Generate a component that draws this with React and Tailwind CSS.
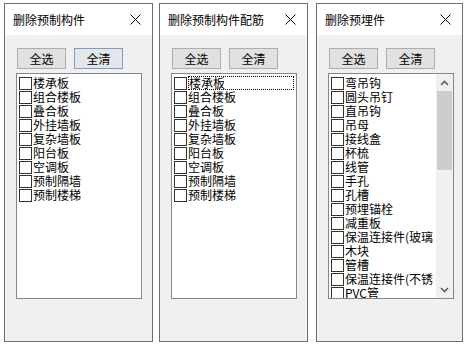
import React from "react";

const font = { fontFamily: '"Noto Sans CJK SC", "Liberation Sans", sans-serif' };

function CloseX() {
    return (
        <svg width="11" height="11" viewBox="0 0 11 11" className="block">
            <path d="M0.5 0.5 L10.5 10.5 M10.5 0.5 L0.5 10.5" stroke="#000" strokeWidth="1" fill="none" />
        </svg>
    );
}

function Chevron({ up }) {
    return (
        <svg width="9" height="6" viewBox="0 0 9 6" className="block">
            <path d={up ? "M1 5 L4.5 1.5 L8 5" : "M1 1 L4.5 4.5 L8 1"} stroke="#606060" strokeWidth="1.6" fill="none" />
        </svg>
    );
}

function Row({ text, focused }) {
    return (
        <div className="flex items-center h-[14px] pl-[2px]">
            <div className="w-[13px] h-[13px] border border-[#333] bg-white shrink-0"></div>
            <span className={focused ? "ml-[1px] mr-[2px] flex-1 h-[14px] leading-[12px] border border-dotted border-black" : "ml-[1px] leading-[14px] whitespace-nowrap"}>
                {text}
            </span>
        </div>
    );
}

function Panel({ title, items, widthClass, extraClass, blueClear, focusFirst, scroll }) {
    return (
        <div className={"h-[339px] border border-[#6f6f6f] bg-[#f0f0f0] flex flex-col " + widthClass + " " + extraClass}>
            <div className="h-[31px] bg-white flex items-center justify-between pl-[8px] pr-[11px] text-[12px] text-black">
                <span>{title}</span>
                <CloseX />
            </div>
            <div className="flex mt-[13px] ml-[12px] gap-[8px] text-[12px]">
                <button className="w-[49px] h-[21px] border border-[#adadad] bg-[#e1e1e1] leading-[19px]">全选</button>
                <button className={"w-[49px] h-[21px] border leading-[19px] " + (blueClear ? "border-[#7f9db9] bg-[#e3e6ea]" : "border-[#adadad] bg-[#e1e1e1]")}>全清</button>
            </div>
            <div className="mt-[4px] ml-[11px] w-[126px] h-[226px] border border-[#828790] bg-white flex overflow-hidden text-[12px] text-black">
                <div className="flex-1 pt-[2px] overflow-hidden">
                    {items.map((t, i) => (
                        <Row key={t + i} text={t} focused={focusFirst && i === 0} />
                    ))}
                </div>
                {scroll && (
                    <div className="w-[17px] bg-[#f0f0f0] flex flex-col">
                        <div className="h-[17px] flex items-center justify-center">
                            <Chevron up />
                        </div>
                        <div className="mx-[1px] h-[79px] bg-[#cdcdcd]"></div>
                        <div className="flex-1"></div>
                        <div className="h-[17px] flex items-center justify-center">
                            <Chevron />
                        </div>
                    </div>
                )}
            </div>
        </div>
    );
}

export default function App() {
    const a = ["楼承板", "组合楼板", "叠合板", "外挂墙板", "复杂墙板", "阳台板", "空调板", "预制隔墙", "预制楼梯"];
    const c = ["弯吊钩", "圆头吊钉", "直吊钩", "吊母", "接线盒", "杯梳", "线管", "手孔", "孔槽", "预埋锚栓", "减重板", "保温连接件(玻璃", "木块", "管槽", "保温连接件(不锈", "PVC管"];
    return (
        <div className="w-[469px] h-[350px] bg-white flex pt-[3px] pl-[4px]" style={font}>
            <Panel title="删除预制构件" items={a} widthClass="w-[149px]" extraClass="" blueClear />
            <Panel title="删除预制构件配筋" items={a} widthClass="w-[149px]" extraClass="ml-[6px]" focusFirst />
            <Panel title="删除预埋件" items={c} widthClass="w-[147px]" extraClass="ml-[8px]" scroll />
        </div>
    );
}
